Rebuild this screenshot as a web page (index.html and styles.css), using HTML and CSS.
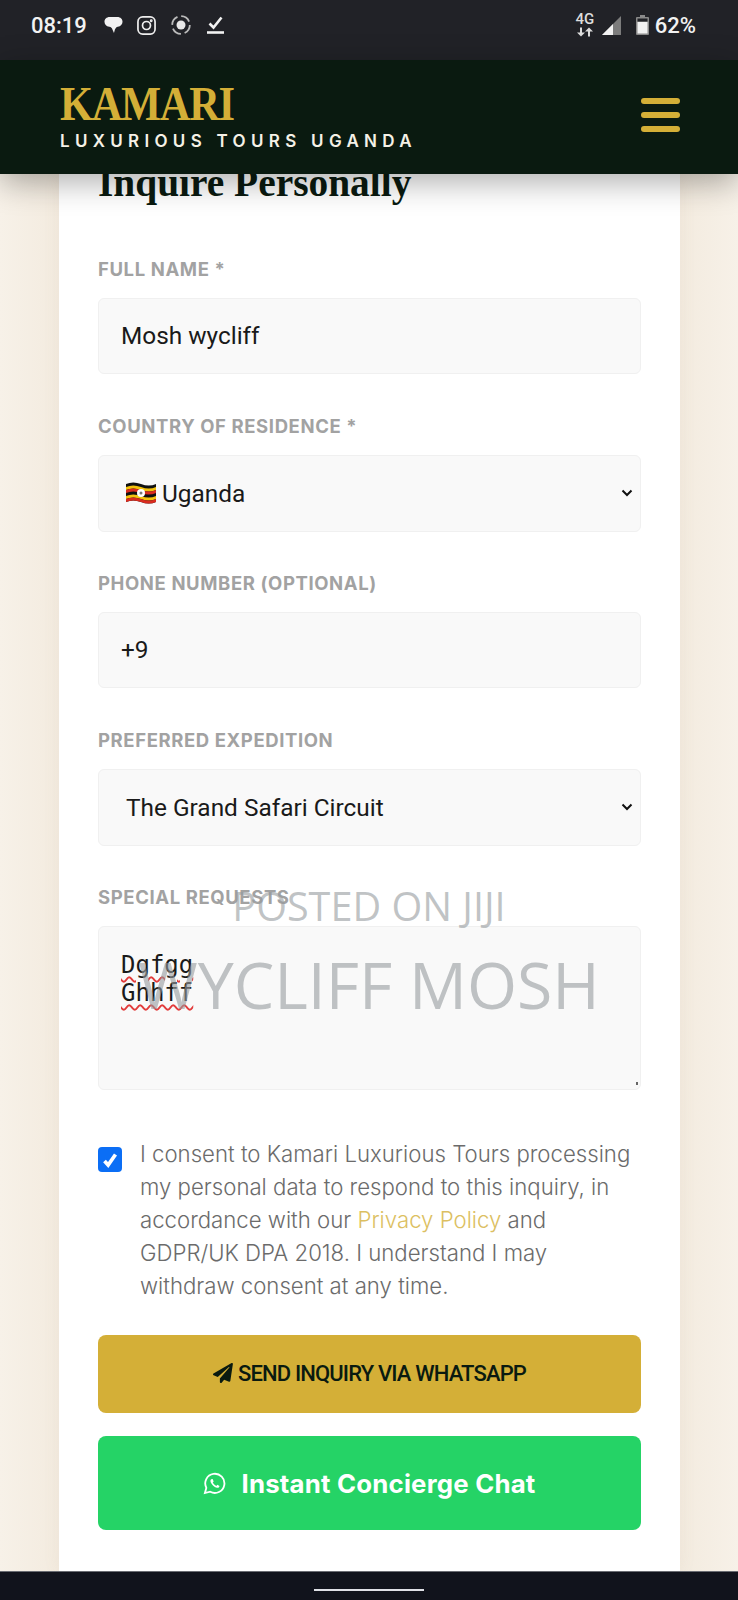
FILE: index.html
```html
<!DOCTYPE html>
<html lang="en">
<head>
<meta charset="utf-8">
<title>Kamari Luxurious Tours Uganda</title>
<link rel="stylesheet" href="styles.css">
</head>
<body>
<div class="screen">
  <div class="statusbar">
    <div class="status-left">
      <span class="clock">08:19</span>
      <svg class="si si-chat" viewBox="0 0 20 18"><path d="M6 .5h8c3.500 0 5.500 2.300 5.500 5s-2 5-5 5.300c-1.200.2-2.200 1-3 3l-1 3.700-1.500-3.500c-.6-2-1.500-3-3.500-3.200C2.300 10.500.5 8.200.5 5.500S2.500.5 6 .5z" fill="#f2f2f2"/></svg>
      <svg class="si si-insta" viewBox="0 0 20 20" fill="none" stroke="#eee" stroke-width="1.800"><rect x="1" y="1" width="18" height="18" rx="5"/><circle cx="10" cy="10" r="4.200"/><circle cx="15" cy="5" r=".6" fill="#eee"/></svg>
      <svg class="si si-rec" viewBox="0 0 20 20" fill="none"><circle cx="10" cy="10" r="8.800" stroke="#bbb" stroke-width="1.800" stroke-dasharray="10 3.800"/><circle cx="10" cy="10" r="4.500" fill="#e8e8e8"/></svg>
      <svg class="si si-check" viewBox="0 0 17 18" fill="none" stroke="#f2f2f2" stroke-width="2.600"><path d="M2.500 7.500l4 4 8-10"/><path d="M0 16.500h17"/></svg>
    </div>
    <div class="status-right">
      <span class="net"><span class="net-g">4G</span><svg class="si-arrows" viewBox="0 0 18 9" fill="#ddd"><path d="M4 0h2v5h3L5 9 1 5h3zM13 0l4 4h-3v5h-2V4H9z"/></svg></span>
      <svg class="si si-signal" viewBox="0 0 19 19"><path d="M19 0v19H0z" fill="#7c7c7c"/><path d="M11 8v11H0z" fill="#f2f2f2"/></svg>
      <svg class="si si-batt" viewBox="0 0 13 20"><path d="M4 0h5v2h3a1 1 0 0 1 1 1v16a1 1 0 0 1-1 1H1a1 1 0 0 1-1-1V3a1 1 0 0 1 1-1h3z" fill="#8a8a8a"/><rect x="1.500" y="3.500" width="10" height="3" fill="#212227"/><rect x="1.500" y="7" width="10" height="11.500" fill="#f2f2f2"/></svg>
      <span class="pct">62%</span>
    </div>
  </div>

  <header class="site-header">
    <div class="brand">
      <div class="brand-name">KAMARI</div>
      <div class="brand-tag">LUXURIOUS TOURS UGANDA</div>
    </div>
    <div class="burger"><span></span><span></span><span></span></div>
  </header>

  <main class="page">
    <section class="card">
      <h2 class="card-title">Inquire Personally</h2>

      <div class="field">
        <div class="label">FULL NAME *</div>
        <div class="control">Mosh wycliff</div>
      </div>
      <div class="field field-select">
        <div class="label">COUNTRY OF RESIDENCE *</div>
        <div class="control select">
          <span class="select-value">
            <svg class="flag" viewBox="0 0 30 24"><path d="M0 3q7-3 15 0t15 0v18q-7 3-15 0t-15 0z" fill="#111"/><path d="M0 6q7-3 15 0t15 0v3q-7 3-15 0t-15 0z" fill="#f4c20d"/><path d="M0 9q7-3 15 0t15 0v3q-7 3-15 0t-15 0z" fill="#d92b1f"/><path d="M0 15q7-3 15 0t15 0v3q-7 3-15 0t-15 0z" fill="#f4c20d"/><path d="M0 18q7-3 15 0t15 0v3q-7 3-15 0t-15 0z" fill="#d92b1f"/><circle cx="15" cy="12" r="4" fill="#fff"/><circle cx="15" cy="12" r="1.500" fill="#777"/></svg>
            Uganda
          </span>
          <svg class="chev" viewBox="0 0 12 8" fill="none" stroke="#111" stroke-width="2"><path d="M1.500 1.500L6 6l4.500-4.500"/></svg>
        </div>
      </div>
      <div class="field">
        <div class="label">PHONE NUMBER (OPTIONAL)</div>
        <div class="control">+9</div>
      </div>
      <div class="field field-select">
        <div class="label">PREFERRED EXPEDITION</div>
        <div class="control select">
          <span class="select-value">The Grand Safari Circuit</span>
          <svg class="chev" viewBox="0 0 12 8" fill="none" stroke="#111" stroke-width="2"><path d="M1.500 1.500L6 6l4.500-4.500"/></svg>
        </div>
      </div>
      <div class="field field-area">
        <div class="label label-area">SPECIAL REQUESTS</div>
        <div class="control area">
          <div class="area-line"><span class="squiggle">Dgfgg</span></div>
          <div class="area-line"><span class="squiggle">Ghhff</span></div>
          <span class="grip"></span>
        </div>
      </div>

      <div class="consent">
        <span class="checkbox"><svg viewBox="0 0 24 24" fill="none" stroke="#fff" stroke-width="4"><path d="M6 13l4 4.500L18 6"/></svg></span>
        <p class="consent-text">I consent to Kamari Luxurious Tours processing my personal data to respond to this inquiry, in accordance with our <span class="link">Privacy Policy</span> and GDPR/UK DPA 2018. I understand I may withdraw consent at any time.</p>
      </div>

      <div class="btn btn-gold">
        <svg class="plane" viewBox="0 0 512 512"><path d="M476 3L12 271c-18 10-16 35 3 43l106 44 288-254c6-5 13 3 9 9L176 396v92c0 25 30 35 45 17l64-78 125 52c14 6 31-3 33-18L509 27c4-20-17-34-33-24z" fill="#0a1a10"/></svg>
        <span>SEND INQUIRY VIA WHATSAPP</span>
      </div>
      <div class="btn btn-green">
        <svg class="wa" viewBox="0 0 24 24" fill="none" stroke="#fff" stroke-width="1.900"><path d="M2 22l1.500-5.500A10 10 0 1 1 7.500 20.600z"/><path d="M8.500 7.500c-1 1-1 2.500.3 4.500s3.500 4 5.700 4.500c1.500.2 2.500-.7 2.700-2l-2.300-1.200-1 1.200c-1.500-.5-3-2-3.700-3.500l.9-1.200-1-2.500z" fill="#fff" stroke="none"/></svg>
        <span>Instant Concierge Chat</span>
      </div>
    </section>

    <div class="watermark">
      <div class="wm-top">POSTED ON JIJI</div>
      <div class="wm-name">WYCLIFF MOSH</div>
    </div>
  </main>

  <div class="navbar"><span class="home-pill"></span></div>
</div>
</body>
</html>
```
FILE: styles.css
```css
* { box-sizing: border-box; }
html, body { margin: 0; padding: 0; }
body { width: 738px; height: 1600px; overflow: hidden; background: #f5eee2; }

.screen { width: 738px; height: 1600px; display: flex; flex-direction: column; overflow: hidden; }

/* Status bar */
.statusbar { height: 60px; flex: none; background: #212227; display: flex; justify-content: space-between; align-items: flex-start; padding: 13px 42px 0 31px; color: #f2f2f2; font-family: Roboto, sans-serif; font-size: 22px; }
.status-left, .status-right { display: flex; align-items: center; height: 24px; }
.clock { font-weight: 500; width: 73px; }
.si { display: block; flex: none; }
.si-chat { width: 19px; height: 18px; margin-right: 14px; }
.si-insta { width: 19px; height: 19px; margin-right: 15px; }
.si-rec { width: 20px; height: 20px; margin-right: 16px; }
.si-check { width: 17px; height: 18px; }
.net { display: flex; flex-direction: column; align-items: center; width: 18px; margin-right: 8px; }
.net-g { font-size: 15px; line-height: 13px; font-weight: 500; color: #ddd; }
.si-arrows { width: 18px; height: 10px; display: block; margin-top: 1px; }
.si-signal { width: 19px; height: 19px; margin-right: 15px; }
.si-batt { width: 13px; height: 20px; margin-right: 6px; }
.pct { font-weight: 500; }

/* Header */
.site-header { position: relative; z-index: 2; height: 114px; flex: none; background: #0a1a10; display: flex; justify-content: space-between; align-items: center; padding: 0 58px 0 60px; box-shadow: 0 8px 30px rgba(0,0,0,.32); }
.brand-name { font-family: "Liberation Serif", serif; font-weight: 700; font-size: 48px; line-height: 46px; letter-spacing: -1.500px; color: #d4af37; margin-top: 16px; transform: scaleX(.885); transform-origin: left center; }
.brand-tag { font-family: Inter, sans-serif; font-weight: 600; font-size: 17px; line-height: 20px; letter-spacing: 5.300px; color: #f5f1e6; margin-top: 4px; margin-bottom: 18px; white-space: nowrap; }
.burger { display: flex; flex-direction: column; gap: 8px; width: 39px; margin-top: -5px; }
.burger span { height: 6px; border-radius: 3px; background: #d4af37; }

/* Page */
.page { position: relative; flex: 1; min-height: 0; overflow: hidden; background: linear-gradient(90deg, #f7f1e8 0, #f3ebdf 60px, #f3ebdf 680px, #f7f1e8 738px); }
.card { display: flow-root; width: 621px; margin: 0 0 0 59px; height: 100%; background: #fff; padding: 0 39px; box-shadow: 0 0 16px rgba(160,140,110,.08); }
.card-title { margin: -13px 0 53px; font-family: "Liberation Serif", serif; font-weight: 700; font-size: 39.400px; line-height: 44px; color: #0a1a10; white-space: nowrap; }

.field { margin-bottom: 41px; }
.field-select { margin-bottom: 40px; }
.field-area { margin-bottom: 47px; }
.label { font-family: Inter, sans-serif; font-weight: 700; font-size: 18.500px; line-height: 22px; letter-spacing: .6px; color: #a2a2a2; margin-bottom: 18px; white-space: nowrap; }
.label-area { margin-top: 2px; margin-bottom: 18px; }
.control { height: 76px; background: #f9f9f9; border: 1px solid #f0f0f0; border-radius: 6px; padding: 0 22px 2px; display: flex; align-items: center; font-family: Roboto, sans-serif; font-size: 24.400px; color: #1a1a1a; }
.select { height: 77px; justify-content: space-between; padding: 0 7px 1px 27px; }
.select-value { display: flex; align-items: center; gap: 6px; }
.flag { width: 30px; height: 24px; display: block; }
.chev { width: 12px; height: 8px; display: block; }

.area { height: 164px; display: block; padding: 24px 22px 0; position: relative; font-family: "DejaVu Sans Mono", monospace; font-size: 24px; }
.area-line { line-height: 28px; height: 28px; }
.squiggle { text-decoration: underline wavy #e23b3b 1.500px; text-underline-offset: 3px; }
.grip { position: absolute; right: 2px; bottom: 4px; width: 2px; height: 3px; background: #666; }

.consent { display: flex; gap: 18px; margin-bottom: 33px; }
.checkbox { flex: none; width: 24px; height: 25px; margin-top: 10px; background: #0b6ef5; border-radius: 4px; display: flex; align-items: center; justify-content: center; }
.checkbox svg { width: 22px; height: 22px; display: block; }
.consent-text { margin: 0; font-family: Inter, sans-serif; font-weight: 300; font-size: 22.200px; line-height: 33px; color: #6b6b6b; }
.link { color: #dcbf62; }

.btn { display: flex; align-items: center; justify-content: center; border-radius: 8px; white-space: nowrap; }
.btn-gold { height: 78px; background: #d4af37; margin-bottom: 23px; gap: 5px; font-family: Roboto, sans-serif; font-weight: 500; font-size: 22px; letter-spacing: -.85px; color: #0a1a10; padding-bottom: 2px; }
.plane { width: 20px; height: 20px; display: block; }
.btn-green { height: 94px; background: #25d366; gap: 15px; font-family: Inter, sans-serif; font-weight: 700; font-size: 25.800px; letter-spacing: .2px; color: #fff; }
.wa { width: 23px; height: 23px; display: block; }

/* Overlay photo stamp */
.watermark { position: absolute; left: 0; right: 0; top: 705px; text-align: center; color: rgba(150,155,158,.6); font-family: "Open Sans", sans-serif; pointer-events: none; white-space: nowrap; }
.wm-top { font-size: 39.600px; line-height: 54px; }
.wm-name { font-size: 64.400px; line-height: 90px; margin-top: 6px; }

/* Nav bar */
.navbar { height: 29px; flex: none; background: #11131c; border-top: 1px solid #6a6c72; display: flex; justify-content: center; padding-top: 17px; }
.home-pill { width: 110px; height: 2px; background: #dfe0e6; }
```
